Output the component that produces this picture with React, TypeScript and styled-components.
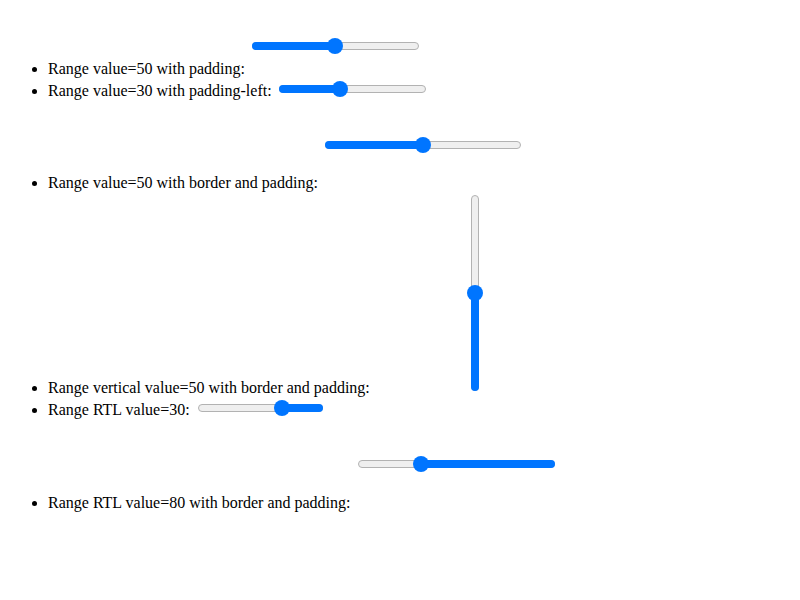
import React from "react";
import styled, { createGlobalStyle } from "styled-components";

const GlobalStyle = createGlobalStyle`
  body {
    margin: 8px;
    background: #fff;
    color: #000;
    font-family: "Liberation Serif", "Times New Roman", serif;
    font-size: 16px;
  }
`;

const List = styled.ul`
  margin: 16px 0;
  padding-left: 40px;
`;

const Item = styled.li`
  list-style: disc;
`;

type BoxProps = {
  $pad: string;
  $sink?: number;
};

// overflow hidden puts the baseline at the bottom edge, like a form control
const SliderBox = styled.span<BoxProps>`
  display: inline-block;
  overflow: hidden;
  padding: ${(p) => p.$pad};
  vertical-align: ${(p) => (p.$sink ? `-${p.$sink}px` : "baseline")};
`;

type TrackProps = {
  $length: number;
  $vertical?: boolean;
};

const Track = styled.span<TrackProps>`
  position: relative;
  display: flex;
  align-items: center;
  justify-content: center;
  width: ${(p) => (p.$vertical ? "16px" : `${p.$length}px`)};
  height: ${(p) => (p.$vertical ? `${p.$length}px` : "16px")};
`;

const Rail = styled.span<{ $vertical?: boolean }>`
  position: relative;
  display: block;
  box-sizing: border-box;
  width: ${(p) => (p.$vertical ? "8px" : "100%")};
  height: ${(p) => (p.$vertical ? "100%" : "8px")};
  background: #efefef;
  border: 1px solid #b2b2b2;
  border-radius: 4px;
`;

const Fill = styled.span`
  position: absolute;
  display: block;
  background: #0075ff;
  border-radius: 4px;
`;

const Thumb = styled.span`
  position: absolute;
  width: 16px;
  height: 16px;
  border-radius: 50%;
  background: #0075ff;
`;

type SliderProps = {
  length: number;
  value: number;
  pad: string;
  sink?: number;
  rtl?: boolean;
  vertical?: boolean;
};

const Slider: React.FC<SliderProps> = ({ length, value, pad, sink, rtl, vertical }) => {
  // thumb centre, measured from the start of the track
  const travel = length - 16;
  const fromStart = 8 + (value / 100) * travel;

  let fillStyle: React.CSSProperties;
  let thumbStyle: React.CSSProperties;

  if (vertical) {
    fillStyle = { left: -1, width: 8, bottom: -1, height: fromStart + 1 };
    thumbStyle = { left: 0, top: length - fromStart - 8 };
  } else if (rtl) {
    fillStyle = { top: -1, height: 8, right: -1, width: fromStart + 1 };
    thumbStyle = { top: 0, left: length - fromStart - 8 };
  } else {
    fillStyle = { top: -1, height: 8, left: -1, width: fromStart + 1 };
    thumbStyle = { top: 0, left: fromStart - 8 };
  }

  return (
    <SliderBox $pad={pad} $sink={sink}>
      <Track $length={length} $vertical={vertical}>
        <Rail $vertical={vertical}>
          <Fill style={fillStyle} />
        </Rail>
        <Thumb style={thumbStyle} />
      </Track>
    </SliderBox>
  );
};

const App: React.FC = () => {
  return (
    <>
      <GlobalStyle />
      <List>
        <Item>
          Range value=50 with padding:{" "}
          <Slider length={167} value={50} pad="14px 0 20px 3px" />
        </Item>
        <Item>
          Range value=30 with padding-left:{" "}
          <Slider length={147} value={40.5} pad="3px 0 0 3px" sink={1} />
        </Item>
        <Item>
          Range value=50 with border and padding:{" "}
          <Slider length={196} value={50} pad="37px 0 35px 3px" />
        </Item>
        <Item>
          Range vertical value=50 with border and padding:{" "}
          <Slider length={196} value={50} pad="3px 0 2px 93px" vertical />
        </Item>
        <Item>
          Range RTL value=30:{" "}
          <Slider length={125} value={30} pad="3px 0 0 4px" sink={1} rtl />
        </Item>
        <Item>
          Range RTL value=80 with border and padding:{" "}
          <Slider length={197} value={69.6} pad="37px 0 36px 3px" rtl />
        </Item>
      </List>
    </>
  );
};

export default App;
